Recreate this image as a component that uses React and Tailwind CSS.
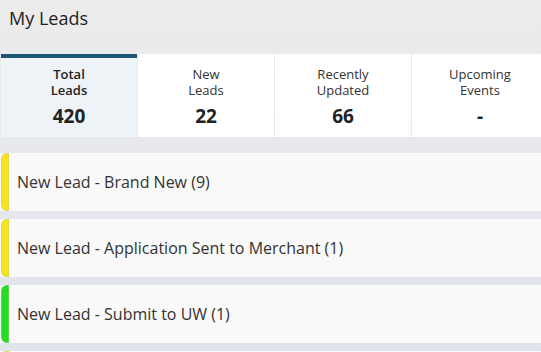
export default function App() {
  const tabs = [
    { l1: "Total", l2: "Leads", v: "420", active: true },
    { l1: "New", l2: "Leads", v: "22" },
    { l1: "Recently", l2: "Updated", v: "66" },
    { l1: "Upcoming", l2: "Events", v: "-" },
  ];
  const rows = [
    { t: "New Lead - Brand New (9)", c: "bg-[#f7e31c]" },
    { t: "New Lead - Application Sent to Merchant (1)", c: "bg-[#f7e31c]" },
    { t: "New Lead - Submit to UW (1)", c: "bg-[#22dd22]" },
    { t: "", c: "bg-[#f7e31c]" },
  ];
  return (
    <div className="w-[541px] h-[352px] overflow-hidden bg-gradient-to-b from-[#ececec] via-[#e6e8ec] to-[#dfe3ea] text-[#222]" style={{ fontFamily: "'Open Sans', 'Noto Sans', sans-serif" }}>
      <div className="h-[54px] pl-[9px] pt-[5px] text-[18px] text-[#222]">My Leads</div>
      <div className="flex gap-px px-px">
        {tabs.map((t, i) => (
          <div key={i} className={`w-[136px] shrink-0 h-[83px] flex flex-col items-center ${t.active ? "bg-[#eef3f7] border-t-[4px] border-[#1d5675] pt-[8px]" : "bg-white pt-[12px]"}`}>
            <div className={`text-[13px] leading-[16px] text-center ${t.active ? "font-semibold text-[#222]" : "text-[#333]"}`}>
              <div>{t.l1}</div>
              <div>{t.l2}</div>
            </div>
            <div className="mt-[6px] text-[19px] font-bold leading-[24px] text-[#222]">{t.v}</div>
          </div>
        ))}
      </div>
      <div className="mt-[16px] flex flex-col gap-[8px]">
        {rows.map((r, i) => (
          <div key={i} className="h-[58px] flex bg-[#f9f9f9] pl-px">
            <div className={`w-[8px] ${r.c} rounded-l-[6px] border border-[#c8c8a0]/40`} />
            <div className="flex items-center pl-[8px] text-[16px] text-[#333]">{r.t}</div>
          </div>
        ))}
      </div>
    </div>
  );
}
